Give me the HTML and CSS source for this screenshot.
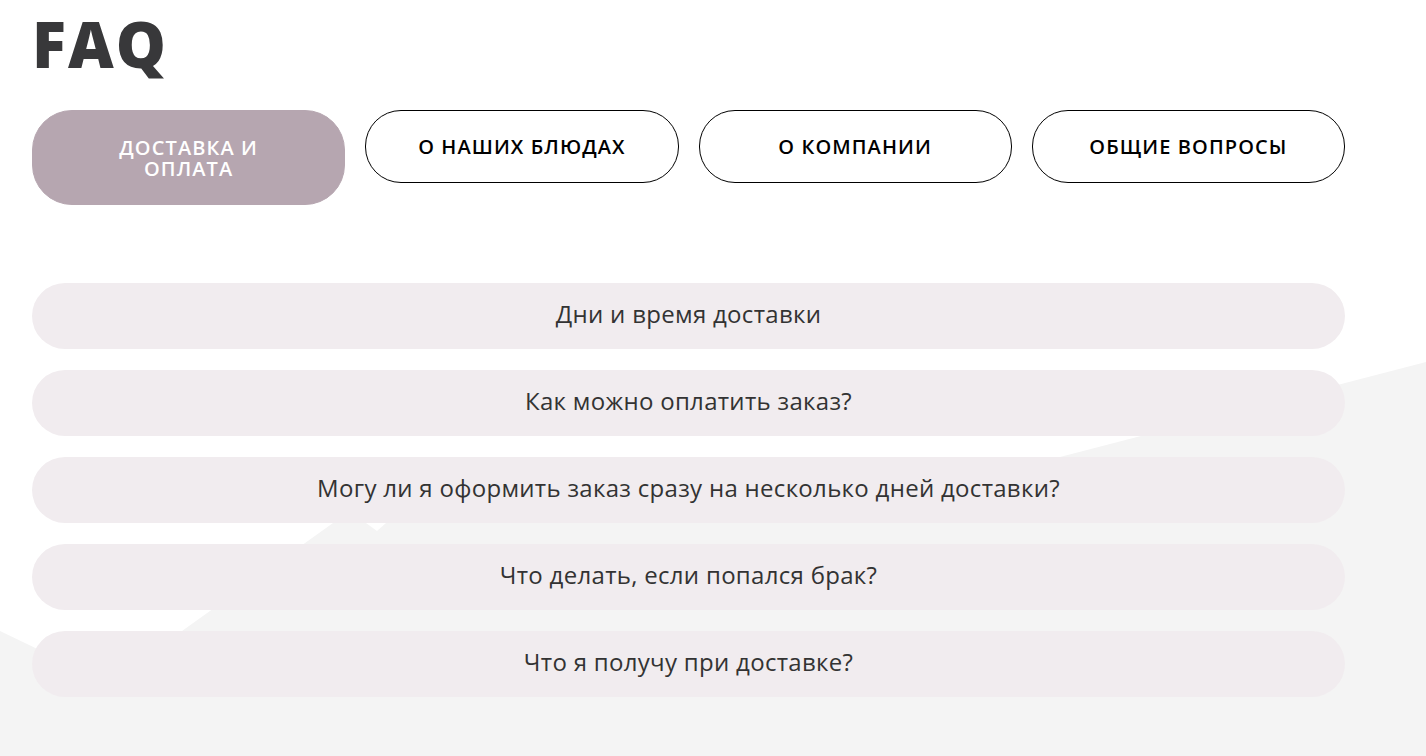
FILE: index.html
```html
<!DOCTYPE html>
<html lang="ru">
<head>
  <meta charset="UTF-8">
  <title>FAQ</title>
  <link rel="stylesheet" href="styles.css">
</head>
<body>
  <div class="backdrop"></div>

  <main class="faq">
    <h1 class="faq-title">FAQ</h1>

    <nav class="faq-tabs">
      <button class="tab tab-active">Доставка и оплата</button>
      <button class="tab">О наших блюдах</button>
      <button class="tab">О компании</button>
      <button class="tab">Общие вопросы</button>
    </nav>

    <ul class="faq-list">
      <li class="question">Дни и время доставки</li>
      <li class="question">Как можно оплатить заказ?</li>
      <li class="question">Могу ли я оформить заказ сразу на несколько дней доставки?</li>
      <li class="question">Что делать, если попался брак?</li>
      <li class="question">Что я получу при доставке?</li>
    </ul>
  </main>
</body>
</html>
```

FILE: styles.css
```css
body {
  margin: 0;
  background: #fff;
  font-family: "Open Sans", "DejaVu Sans", sans-serif;
  color: #333;
}
.backdrop {
  position: absolute;
  left: 0;
  top: 0;
  width: 1426px;
  height: 756px;
  background: #f4f4f4;
  clip-path: polygon(1426px 362px, 1060px 457px, 386px 523px, 377px 531px, 366px 523px, 350px 508px, 333px 523px, 182px 631px, 104px 681px, 0 631px, 0 756px, 1426px 756px);
  z-index: -1;
}
.faq {
  width: 1313px;
  padding: 12px 0 0 32px;
}
.faq-title {
  margin: 0;
  font-size: 63px;
  line-height: 64px;
  font-weight: 800;
  color: #38383a;
  letter-spacing: 2px;
}
.faq-tabs {
  display: grid;
  grid-template-columns: repeat(4, 1fr);
  gap: 20px;
  align-items: start;
  margin-top: 34px;
}
.tab {
  padding: 25px 40px;
  border: 1px solid #000;
  border-radius: 36px;
  background: #fff;
  font-family: inherit;
  font-size: 20px;
  line-height: 21px;
  font-weight: 600;
  letter-spacing: 1.1px;
  text-transform: uppercase;
  color: #000;
  cursor: pointer;
}
.tab-active {
  padding: 26px 70px 25px;
  background: #b6a6b0;
  border-color: #b6a6b0;
  border-radius: 40px;
  color: #fff;
}
.faq-list {
  list-style: none;
  margin: 78px 0 0;
  padding: 0;
  display: flex;
  flex-direction: column;
  gap: 21px;
}
.question {
  height: 66px;
  padding-bottom: 5px;
  box-sizing: border-box;
  border-radius: 33px;
  background: #f1ecef;
  display: flex;
  align-items: center;
  justify-content: center;
  font-size: 24px;
  letter-spacing: 0.3px;
  color: #333;
}
```
